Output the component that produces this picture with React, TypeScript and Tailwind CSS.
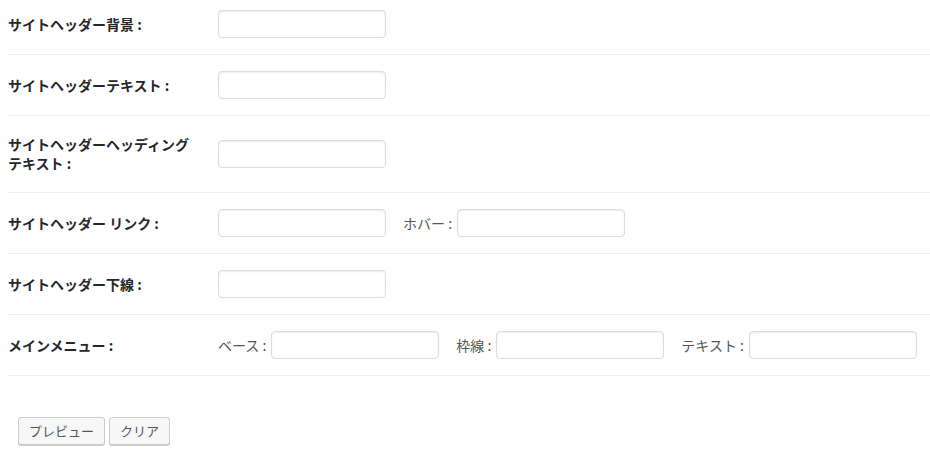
const font = "font-['Noto_Sans_CJK_JP','Liberation_Sans',sans-serif]";

function Field({ w = "w-[168px]" }: { w?: string }) {
  return (
    <input
      type="text"
      className={`${w} h-[28px] rounded-[4px] border border-[#dddddd] bg-white shadow-[inset_0_1px_2px_rgba(0,0,0,0.07)] outline-none`}
    />
  );
}

function Sub({ label, className = "" }: { label: string; className?: string }) {
  return (
    <span className={`flex items-center ${className}`}>
      <span className="mr-[5px] text-[14px] text-[#555555]">{label}</span>
      <Field />
    </span>
  );
}

function Row({ label, first = false, children }: { label: string; first?: boolean; children: React.ReactNode }) {
  return (
    <div className={`flex items-center border-b border-[#eeeeee] ${first ? "pt-[10px] pb-[16px]" : "py-[16px]"}`}>
      <div className="w-[210px] shrink-0 pr-[20px] text-[14px] font-bold leading-[19px] text-[#23282d]">{label}</div>
      <div className="flex items-center">{children}</div>
    </div>
  );
}

export default function App() {
  return (
    <div className={`h-[461px] w-[930px] bg-white ${font}`}>
      <div className="pl-2">
        <Row label="サイトヘッダー背景 :" first>
          <Field />
        </Row>
        <Row label="サイトヘッダーテキスト :">
          <Field />
        </Row>
        <Row label="サイトヘッダーヘッディングテキスト :">
          <div className="py-[8px]">
            <Field />
          </div>
        </Row>
        <Row label="サイトヘッダー リンク :">
          <Field />
          <Sub label="ホバー :" className="ml-[17px]" />
        </Row>
        <Row label="サイトヘッダー下線 :">
          <Field />
        </Row>
        <Row label="メインメニュー :">
          <Sub label="ベース :" />
          <Sub label="枠線 :" className="ml-[17px]" />
          <Sub label="テキスト :" className="ml-[17px]" />
        </Row>
      </div>
      <div className="mt-[41px] flex gap-[4px] pl-[18px]">
        <button className="h-[28px] rounded-[3px] border border-[#cccccc] bg-[#f7f7f7] px-[10px] text-[13px] text-[#555555] shadow-[0_1px_0_#cccccc]">
          プレビュー
        </button>
        <button className="h-[28px] rounded-[3px] border border-[#cccccc] bg-[#f7f7f7] px-[10px] text-[13px] text-[#555555] shadow-[0_1px_0_#cccccc]">
          クリア
        </button>
      </div>
    </div>
  );
}
